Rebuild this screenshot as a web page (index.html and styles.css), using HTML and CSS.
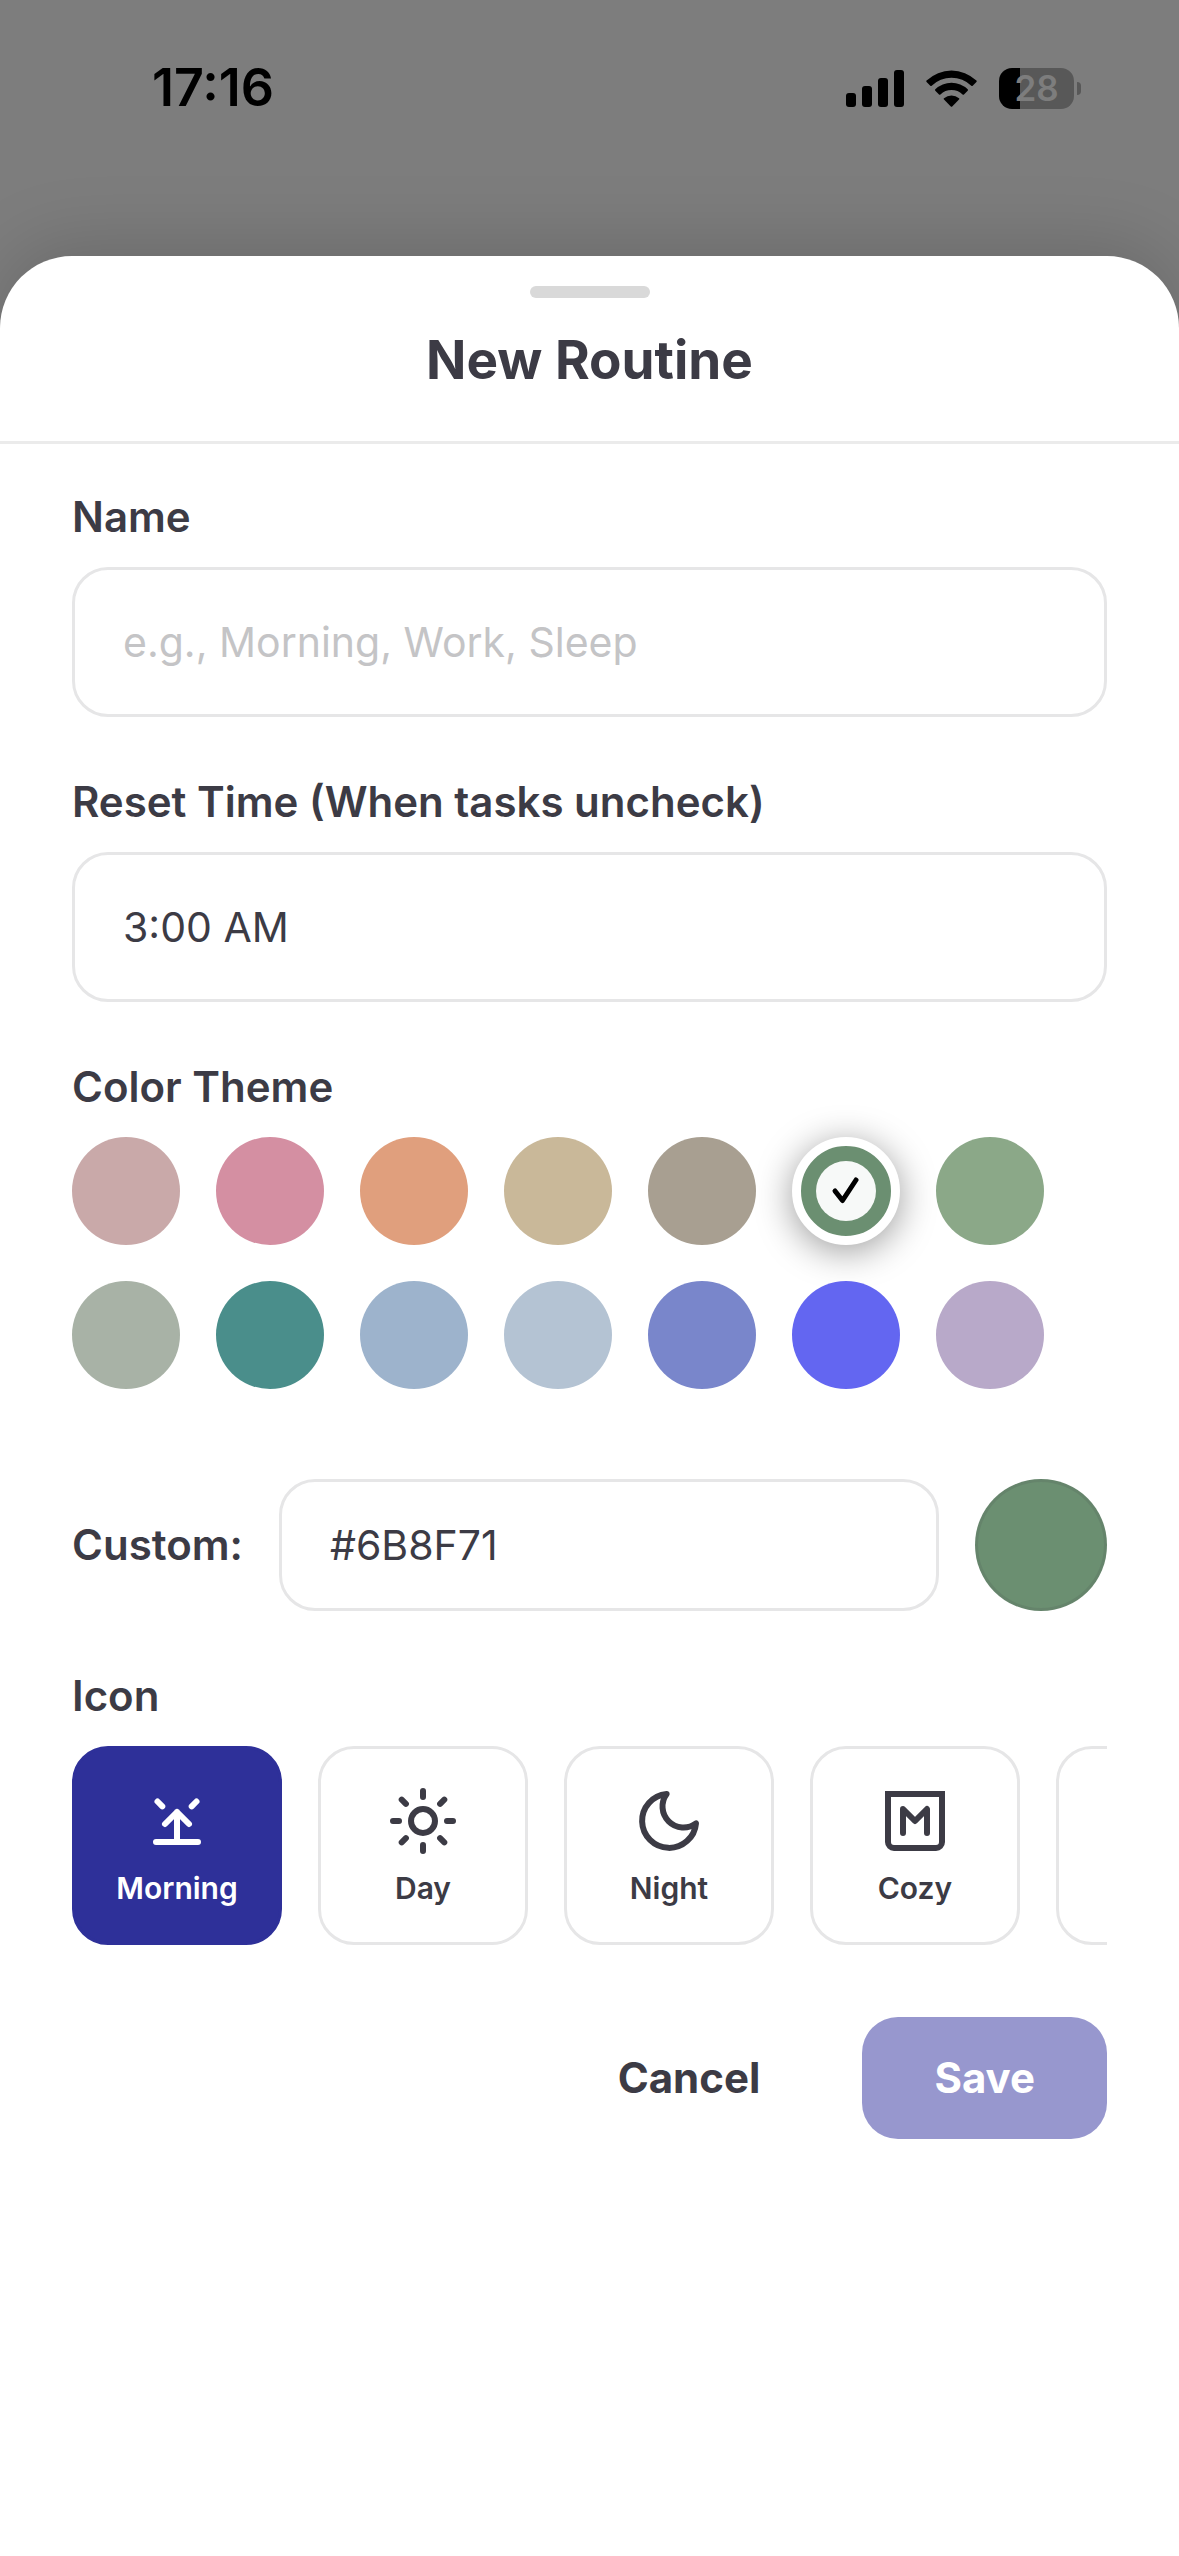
FILE: index.html
```html
<!DOCTYPE html>
<html lang="en">
<head>
  <meta charset="utf-8">
  <meta name="viewport" content="width=device-width, initial-scale=1">
  <title>New Routine</title>
  <link rel="stylesheet" href="styles.css">
</head>
<body class="screen">
  <header class="status">
    <time class="clock">17:16</time>
    <div class="indicators">
      <svg class="signal" viewBox="0 0 58 37" aria-hidden="true">
        <rect x="0" y="23" width="10" height="14" rx="3"/>
        <rect x="16" y="16" width="10" height="21" rx="3"/>
        <rect x="32" y="8" width="10" height="29" rx="3"/>
        <rect x="48" y="0" width="10" height="37" rx="3"/>
      </svg>
      <svg class="wifi" viewBox="0 0 51 37" aria-hidden="true">
        <path d="M0.6 10.6a36 36 0 0 1 49.8 0 1 1 0 0 1 0 1.4l-3.7 3.7a1 1 0 0 1-1.4 0 28.5 28.5 0 0 0-39.6 0 1 1 0 0 1-1.4 0L0.6 12a1 1 0 0 1 0-1.4z"/>
        <path d="M9.3 19.3a23.5 23.5 0 0 1 32.4 0 1 1 0 0 1 0 1.4l-3.7 3.7a1 1 0 0 1-1.4 0 16 16 0 0 0-22.2 0 1 1 0 0 1-1.4 0l-3.7-3.7a1 1 0 0 1 0-1.4z"/>
        <path d="M18 28.2a11.5 11.5 0 0 1 15 0 1 1 0 0 1 0 1.4l-6.8 6.9a1 1 0 0 1-1.4 0L18 29.6a1 1 0 0 1 0-1.4z"/>
      </svg>
      <div class="battery"><span class="battery-level">28</span></div>
    </div>
  </header>

  <main class="sheet">
    <div class="sheet-head">
      <span class="handle"></span>
      <h1 class="title">New Routine</h1>
    </div>

    <form class="form">
      <div class="field">
        <label class="label" for="name">Name</label>
        <input class="input" id="name" type="text" placeholder="e.g., Morning, Work, Sleep">
      </div>

      <div class="field">
        <label class="label" for="reset">Reset Time (When tasks uncheck)</label>
        <input class="input" id="reset" type="text" value="3:00 AM">
      </div>

      <div class="field" role="radiogroup" aria-labelledby="theme-label">
        <span class="label" id="theme-label">Color Theme</span>
        <div class="swatches">
          <input class="swatch rosewood" type="radio" name="theme" aria-label="Rosewood">
          <input class="swatch pink" type="radio" name="theme" aria-label="Pink">
          <input class="swatch orange" type="radio" name="theme" aria-label="Orange">
          <input class="swatch sand" type="radio" name="theme" aria-label="Sand">
          <input class="swatch taupe" type="radio" name="theme" aria-label="Taupe">
          <label class="swatch forest chosen">
            <input class="hidden-radio" type="radio" name="theme" aria-label="Forest" checked>
            <svg class="check" viewBox="0 0 60 60" aria-hidden="true"><path d="M19 30l7.5 9.5L40 19"/></svg>
          </label>
          <input class="swatch green" type="radio" name="theme" aria-label="Green">
          <input class="swatch sage" type="radio" name="theme" aria-label="Sage">
          <input class="swatch teal" type="radio" name="theme" aria-label="Teal">
          <input class="swatch sky" type="radio" name="theme" aria-label="Sky">
          <input class="swatch mist" type="radio" name="theme" aria-label="Mist">
          <input class="swatch periwinkle" type="radio" name="theme" aria-label="Periwinkle">
          <input class="swatch indigo" type="radio" name="theme" aria-label="Indigo">
          <input class="swatch lilac" type="radio" name="theme" aria-label="Lilac">
        </div>
      </div>

      <div class="custom">
        <label class="label" for="hex">Custom:</label>
        <input class="input compact" id="hex" type="text" value="#6B8F71">
        <button class="preview" type="button" aria-label="Pick a color"></button>
      </div>

      <div class="field" role="radiogroup" aria-labelledby="icon-label">
        <span class="label" id="icon-label">Icon</span>
        <div class="tiles">
          <label class="tile selected">
            <input class="hidden-radio" type="radio" name="icon" checked>
            <svg class="icon" viewBox="0 0 24 24" aria-hidden="true"><path d="M5 19h14M12 19V9M8 13l4-4 4 4M5.5 5.5l1.6 1.6M18.5 5.5l-1.6 1.6"/></svg>
            Morning
          </label>
          <label class="tile">
            <input class="hidden-radio" type="radio" name="icon">
            <svg class="icon" viewBox="0 0 24 24" aria-hidden="true"><circle cx="12" cy="12" r="4"/><path d="M12 2v2M12 20v2M2 12h2M20 12h2M4.9 4.9l1.4 1.4M17.7 17.7l1.4 1.4M4.9 19.1l1.4-1.4M17.7 6.3l1.4-1.4"/></svg>
            Day
          </label>
          <label class="tile">
            <input class="hidden-radio" type="radio" name="icon">
            <svg class="icon" viewBox="0 0 24 24" aria-hidden="true"><path d="M21 12.79A9 9 0 1 1 11.21 3 7 7 0 0 0 21 12.79z"/></svg>
            Night
          </label>
          <label class="tile">
            <input class="hidden-radio" type="radio" name="icon">
            <svg class="icon" viewBox="0 0 24 24" aria-hidden="true"><path class="square" d="M3 3h18v16a2 2 0 0 1-2 2H5a2 2 0 0 1-2-2z"/><path d="M8 16V8l4 4 4-4v8"/></svg>
            Cozy
          </label>
          <label class="tile">
            <input class="hidden-radio" type="radio" name="icon" aria-label="More">
          </label>
        </div>
      </div>

      <div class="actions">
        <button class="button" type="button">Cancel</button>
        <button class="button primary" type="submit" disabled>Save</button>
      </div>
    </form>
  </main>
</body>
</html>
```

FILE: styles.css
```css
* {
  box-sizing: border-box;
}

.screen {
  display: flex;
  flex-direction: column;
  min-height: 100vh;
  margin: 0;
  background: #7d7d7d;
  color: #3c3b45;
  font-family: Inter, "Liberation Sans", sans-serif;
  font-size: 42px;
  line-height: 50px;
}

/* Status bar */

.status {
  display: flex;
  justify-content: space-between;
  align-items: center;
  height: 256px;
  padding: 0 98px 80px 152px;
  color: #000;
}

.clock {
  font-size: 52px;
  font-weight: 600;
}

.indicators {
  display: flex;
  align-items: center;
  gap: 22px;
}

.signal {
  width: 58px;
  height: 37px;
}

.wifi {
  width: 51px;
  height: 37px;
}

.battery {
  display: flex;
  align-items: center;
  gap: 3px;
}

.battery-level {
  width: 75px;
  border-radius: 13px;
  background: linear-gradient(to right, #000 21px, #585858 21px);
  color: #7d7d7d;
  font-size: 35px;
  font-weight: 600;
  line-height: 41px;
  text-align: center;
}

.battery::after {
  content: "";
  width: 4px;
  height: 13px;
  border-radius: 0 4px 4px 0;
  background: #585858;
}

/* Sheet */

.sheet {
  flex: 1;
  border-radius: 72px 72px 0 0;
  background: #fff;
  box-shadow: 0 -12px 72px rgba(0, 0, 0, 0.15);
}

.sheet-head {
  display: flex;
  flex-direction: column;
  align-items: center;
  gap: 30px;
  padding: 30px 72px 48px;
  border-bottom: 3px solid #ebebeb;
}

.handle {
  width: 120px;
  height: 12px;
  border-radius: 6px;
  background: #d9d9d9;
}

.title {
  margin: 0;
  font-size: 53px;
  font-weight: 700;
  line-height: 65px;
}

.form {
  display: flex;
  flex-direction: column;
  gap: 60px;
  padding: 48px 72px;
}

.field {
  display: flex;
  flex-direction: column;
  gap: 25px;
}

.label {
  font-weight: 600;
}

.input {
  width: 100%;
  min-width: 0;
  padding: 48px;
  border: 3px solid #e6e6e7;
  border-radius: 36px;
  background: #fff;
  color: inherit;
  font: inherit;
  font-size: 41px;
  line-height: 48px;
}

.input::placeholder {
  color: #c4c4c6;
  opacity: 1;
}

.hidden-radio {
  position: absolute;
  opacity: 0;
}

/* Color theme */

.swatches {
  display: flex;
  flex-wrap: wrap;
  gap: 36px;
}

.swatch {
  width: 108px;
  height: 108px;
  margin: 0;
  border-radius: 50%;
  appearance: none;
}

.rosewood { background: #c9a9a9; }
.pink { background: #d48fa2; }
.orange { background: #e09f7d; }
.sand { background: #c9b899; }
.taupe { background: #a89f91; }
.forest { background: #6b8f71; }
.green { background: #8ba888; }
.sage { background: #a8b2a6; }
.teal { background: #4a8e8b; }
.sky { background: #9db3cc; }
.mist { background: #b4c3d3; }
.periwinkle { background: #7986cb; }
.indigo { background: #6366f1; }
.lilac { background: #b8a9c9; }

.chosen {
  display: flex;
  justify-content: center;
  align-items: center;
  border: 9px solid #fff;
  box-shadow: 0 6px 36px rgba(0, 0, 0, 0.4);
}

.check {
  width: 60px;
  height: 60px;
  border-radius: 50%;
  background: rgba(255, 255, 255, 0.95);
  fill: none;
  stroke: #000;
  stroke-width: 5;
  stroke-linecap: round;
  stroke-linejoin: round;
}

.custom {
  display: flex;
  align-items: center;
  gap: 36px;
  padding-top: 30px;
}

.compact {
  flex: 1;
  padding: 39px 48px;
}

.preview {
  flex: none;
  width: 132px;
  height: 132px;
  border: 3px solid rgba(60, 59, 69, 0.12);
  border-radius: 50%;
  background: #6b8f71 border-box;
}

/* Icon picker */

.tiles {
  display: flex;
  gap: 36px;
  overflow: hidden;
}

.tile {
  display: flex;
  flex: none;
  flex-direction: column;
  align-items: center;
  gap: 13px;
  width: 210px;
  padding: 36px 0;
  border: 3px solid #e6e6e7;
  border-radius: 36px;
  font-size: 30px;
  font-weight: 600;
  line-height: 36px;
}

.selected {
  border-color: #2e3099;
  background: #2e3099;
  color: #fff;
}

.icon {
  width: 72px;
  height: 72px;
  fill: none;
  stroke: currentColor;
  stroke-width: 2;
  stroke-linecap: round;
  stroke-linejoin: round;
}

.square {
  stroke-linejoin: miter;
}

/* Actions */

.actions {
  display: flex;
  justify-content: flex-end;
  gap: 30px;
  padding-top: 12px;
}

.button {
  padding: 36px 72px;
  border: 0;
  border-radius: 36px;
  background: none;
  color: inherit;
  font: inherit;
  font-weight: 700;
}

.primary {
  background: #9797ce;
  color: #fff;
}
```
